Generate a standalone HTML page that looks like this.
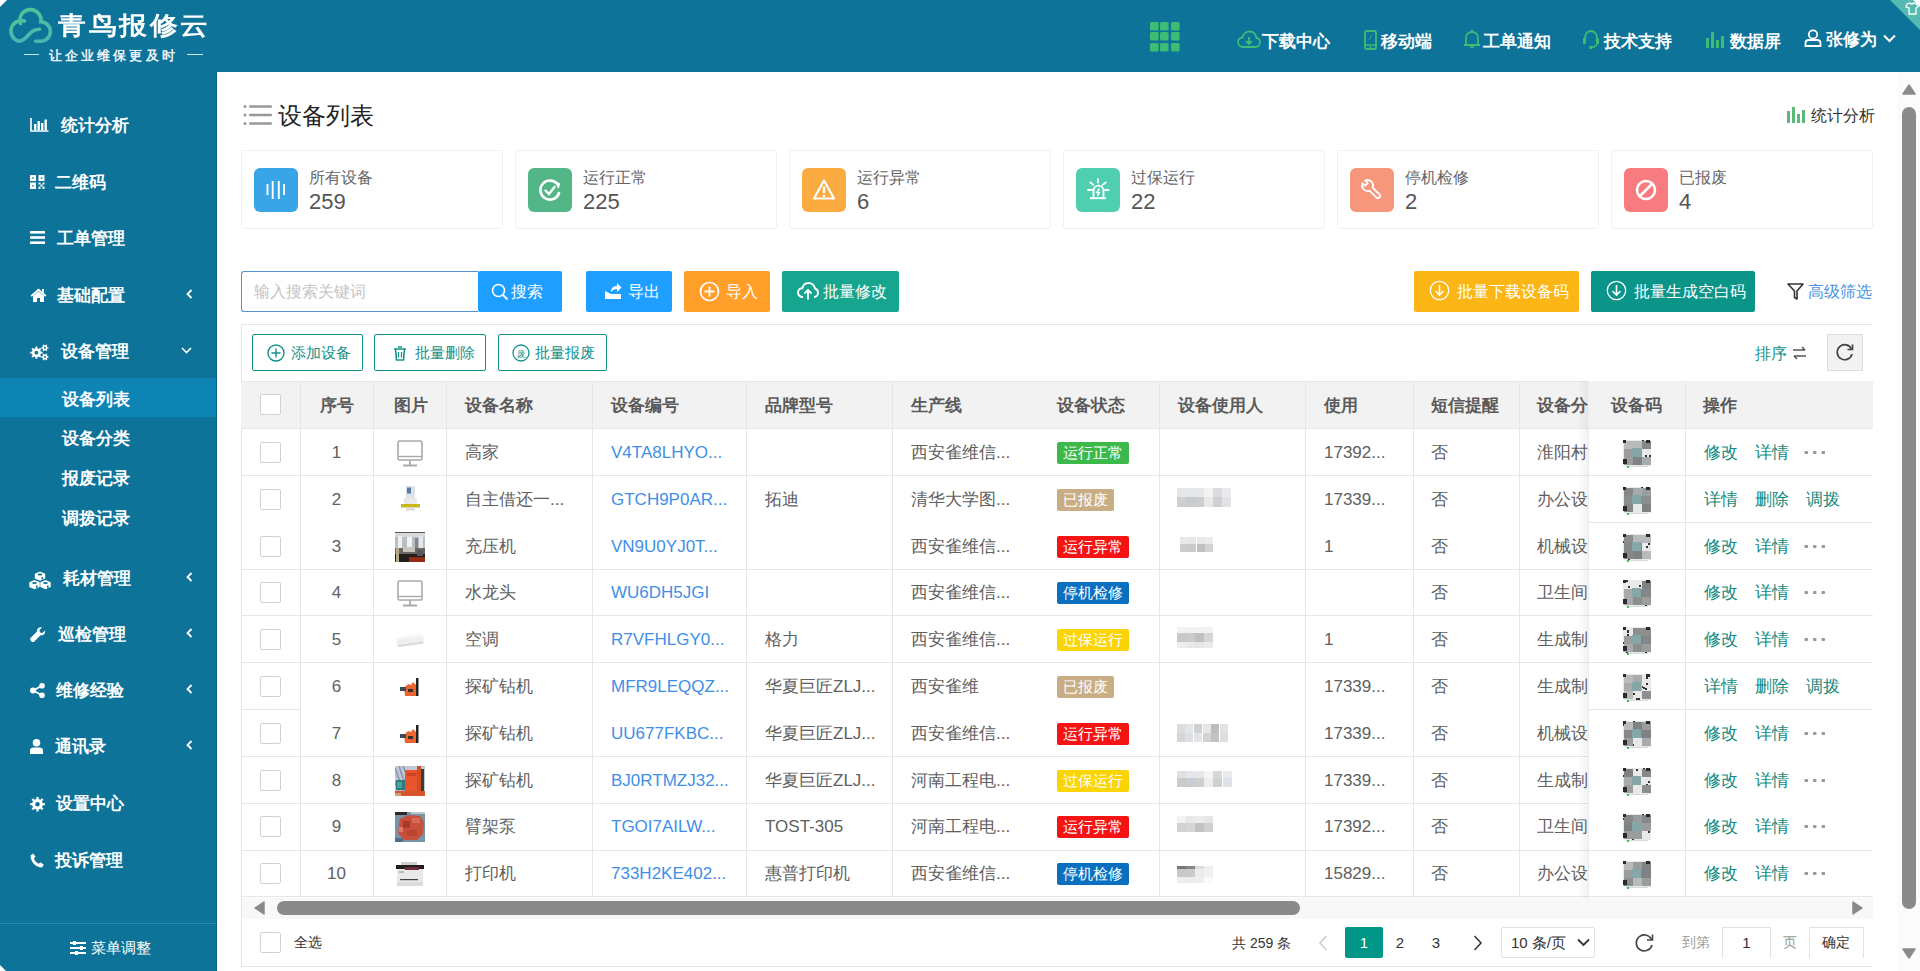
<!DOCTYPE html><html><head><meta charset="utf-8"><style>
*{box-sizing:border-box;margin:0;padding:0}
html,body{width:1920px;height:971px;overflow:hidden;background:#fff;font-family:"Liberation Sans",sans-serif;}
.abs{position:absolute}
.hdr{position:absolute;left:0;top:0;width:1920px;height:72px;background:#0d7399}
.side{position:absolute;left:0;top:72px;width:217px;height:899px;background:#0d7399}
.nav{position:absolute;top:31px;height:22px;line-height:22px;color:#fff;font-size:17px;font-weight:700;white-space:nowrap}
.mi{position:absolute;left:0;width:217px;height:40px;line-height:40px;color:#fff;font-size:17px;white-space:nowrap}
.t{position:absolute;white-space:nowrap}
</style></head><body>
<div class="hdr"><svg class="abs" style="left:0;top:0" width="60" height="50" viewBox="0 0 60 50">
<defs><linearGradient id="cg" x1="0" y1="0" x2="0" y2="1"><stop offset="0" stop-color="#52c29b"/><stop offset="1" stop-color="#46b6b2"/></linearGradient></defs>
<path d="M24.5 21 A10.2 10.2 0 1 0 18.5 41.2 C23 41.2 25.5 38.5 28.5 35 C31.5 31.5 34.5 29.3 39.5 29.3" fill="none" stroke="url(#cg)" stroke-width="3.6" stroke-linecap="round"/><path d="M20.5 23.5 A10.5 10.5 0 1 1 40.8 21.8 A9.7 9.7 0 0 1 40.5 41.2 H35.5" fill="none" stroke="url(#cg)" stroke-width="3.6" stroke-linecap="round"/>
<path d="M0 0 H7 L0 7 Z" fill="#fff"/>
</svg><div class="t" style="left:58px;top:11px;font-size:28px;line-height:34px;color:#fff;font-weight:700;letter-spacing:2.6px;transform:scaleY(0.9);transform-origin:0 0">青鸟报修云</div><div class="abs" style="left:24px;top:54px;width:15px;height:1px;background:#cfe3ea"></div><div class="abs" style="left:187px;top:54px;width:16px;height:1px;background:#cfe3ea"></div><div class="t" style="left:49px;top:48px;font-size:13px;line-height:16px;color:#eef4f7;letter-spacing:3.1px;font-family:'Liberation Serif',serif;font-weight:bold">让企业维保更及时</div><svg class="abs" style="left:1150px;top:22px" width="30" height="30" viewBox="0 0 30 30"><rect x="0" y="0" width="8.6" height="8.6" rx="1.5" fill="#3dbd74"/><rect x="0" y="10" width="8.6" height="8.6" rx="1.5" fill="#3dbd74"/><rect x="0" y="21" width="8.6" height="8.6" rx="1.5" fill="#3dbd74"/><rect x="10" y="0" width="8.6" height="8.6" rx="1.5" fill="#3dbd74"/><rect x="10" y="10" width="8.6" height="8.6" rx="1.5" fill="#3dbd74"/><rect x="10" y="21" width="8.6" height="8.6" rx="1.5" fill="#3dbd74"/><rect x="21" y="0" width="8.6" height="8.6" rx="1.5" fill="#3dbd74"/><rect x="21" y="10" width="8.6" height="8.6" rx="1.5" fill="#3dbd74"/><rect x="21" y="21" width="8.6" height="8.6" rx="1.5" fill="#3dbd74"/></svg><svg class="abs" style="left:1237px;top:30px" width="24" height="19" viewBox="0 0 24 19"><path d="M6 17 C3 17 1 15 1 12 C1 9.5 3 7.5 5.5 7.5 C6 4 9 1.5 12.5 1.5 C16.5 1.5 19 4.5 19.5 8 C21.5 8.3 23 10 23 12.3 C23 15 21 17 18.5 17 Z" fill="none" stroke="#3dbd74" stroke-width="1.8"/><path d="M12 7 V14 M9 11 L12 14 L15 11" fill="none" stroke="#3dbd74" stroke-width="1.8"/></svg><div class="nav" style="left:1262px">下载中心</div><svg class="abs" style="left:1364px;top:30px" width="13" height="20" viewBox="0 0 13 20"><rect x="1" y="1" width="11" height="18" rx="1.5" fill="none" stroke="#3dbd74" stroke-width="1.8"/><path d="M1 15 H12" stroke="#3dbd74" stroke-width="1.5"/><circle cx="6.5" cy="17" r="1" fill="#3dbd74"/><path d="M5 10 L8 5" stroke="#3dbd74" stroke-width="0.8"/></svg><div class="nav" style="left:1381px">移动端</div><svg class="abs" style="left:1463px;top:29px" width="18" height="20" viewBox="0 0 18 20"><path d="M3 16 V9 C3 5.5 5.5 3 9 3 C12.5 3 15 5.5 15 9 V16 M1 16 H17" fill="none" stroke="#3dbd74" stroke-width="1.8"/><path d="M9 1 V3" stroke="#3dbd74" stroke-width="1.8"/><path d="M7 18 H11" stroke="#3dbd74" stroke-width="1.8"/></svg><div class="nav" style="left:1483px">工单通知</div><svg class="abs" style="left:1582px;top:29px" width="18" height="21" viewBox="0 0 18 21"><path d="M3 12 V9 C3 5 5.5 2 9 2 C12.5 2 15 5 15 9 V12" fill="none" stroke="#3dbd74" stroke-width="1.8"/><rect x="1" y="9" width="3" height="6" rx="1" fill="#3dbd74"/><rect x="14" y="9" width="3" height="6" rx="1" fill="#3dbd74"/><path d="M15 14 C15 17 13 18 10 18" fill="none" stroke="#3dbd74" stroke-width="1.5"/><circle cx="9" cy="18.5" r="1.8" fill="#3dbd74"/></svg><div class="nav" style="left:1604px">技术支持</div><svg class="abs" style="left:1706px;top:31px" width="18" height="17" viewBox="0 0 18 17"><rect x="0" y="7" width="3" height="10" fill="#3dbd74"/><rect x="5" y="1" width="3" height="16" fill="#3dbd74"/><rect x="10" y="9" width="3" height="8" fill="#3dbd74"/><rect x="15" y="5" width="3" height="12" fill="#3dbd74"/></svg><div class="nav" style="left:1730px">数据屏</div><svg class="abs" style="left:1804px;top:29px" width="18" height="18" viewBox="0 0 18 18"><circle cx="9" cy="5.5" r="4.2" fill="none" stroke="#fff" stroke-width="1.8"/><path d="M1.5 17 V14 C1.5 12 3 11 5 11 H13 C15 11 16.5 12 16.5 14 V17 Z" fill="none" stroke="#fff" stroke-width="1.8"/></svg><div class="nav" style="left:1826px;top:29px">张修为</div><svg class="abs" style="left:1883px;top:34px" width="13" height="9" viewBox="0 0 13 9"><path d="M1 1.5 L6.5 7 L12 1.5" fill="none" stroke="#fff" stroke-width="2"/></svg><svg class="abs" style="left:1890px;top:0" width="30" height="30" viewBox="0 0 30 30"><path d="M0 0 H30 V30 Z" fill="#55bbb0"/><path d="M23 0 H30 V7 Z" fill="#fff"/><path d="M17 4 L20 3 C21 4.3 22.5 4.3 23.5 3 L26.5 4 L28 6.8 L26 8 V14 H19 V8 L16 6.8 Z" fill="none" stroke="#fff" stroke-width="1.3"/></svg></div><div class="side"><div class="abs" style="left:30px;top:46px;line-height:0"><svg width="19" height="14" viewBox="0 0 19 14"><path d="M1 0 V13 H18.5" fill="none" stroke="#fff" stroke-width="1.6"/><rect x="4" y="6" width="2.4" height="6" fill="#fff"/><rect x="7.5" y="3" width="2.4" height="9" fill="#fff"/><rect x="11" y="5" width="2.4" height="7" fill="#fff"/><rect x="14.5" y="1.5" width="2.4" height="10.5" fill="#fff"/></svg></div><div class="t" style="left:61px;top:44px;font-size:17px;line-height:20px;color:#fff;font-weight:700">统计分析</div><div class="abs" style="left:30px;top:103px;line-height:0"><svg width="15" height="14" viewBox="0 0 15 14"><path fill-rule="evenodd" d="M0 0h6v6h-6z M2.3 2.3v1.4h1.4v-1.4z M8.5 0h6v6h-6z M10.8 2.3v1.4h1.4v-1.4z M0 7.5h6v6.5h-6z M2.3 10v1.4h1.4v-1.4z" fill="#fff"/><path d="M8.5 7.5h2v2h-2z M12.5 7.5h2v2h-2z M10.5 9.5h2v2h-2z M8.5 11.5h2v2.5h-2z M12.5 11.5h2v2.5h-2z" fill="#fff"/></svg></div><div class="t" style="left:55px;top:101px;font-size:17px;line-height:20px;color:#fff;font-weight:700">二维码</div><div class="abs" style="left:30px;top:159px;line-height:0"><svg width="15" height="13" viewBox="0 0 15 13"><rect y="0" width="15" height="2.6" fill="#fff"/><rect y="5.2" width="15" height="2.6" fill="#fff"/><rect y="10.4" width="15" height="2.6" fill="#fff"/></svg></div><div class="t" style="left:57px;top:157px;font-size:17px;line-height:20px;color:#fff;font-weight:700">工单管理</div><div class="abs" style="left:30px;top:216px;line-height:0"><svg width="17" height="14" viewBox="0 0 17 14"><path d="M8.5 0.5 L16.5 7.5 L15.2 8.8 L8.5 3 L1.8 8.8 L0.5 7.5 Z M12 1 H14 V5 L12 3.3 Z M3 8 L8.5 3.5 L14 8 V14 H10 V10 H7 V14 H3 Z" fill="#fff"/></svg></div><div class="t" style="left:57px;top:214px;font-size:17px;line-height:20px;color:#fff;font-weight:700">基础配置</div><svg class="abs" style="left:186px;top:217px" width="7" height="10" viewBox="0 0 7 10"><path d="M5.5 1 L1.5 5 L5.5 9" fill="none" stroke="#fff" stroke-width="1.8"/></svg><div class="abs" style="left:30px;top:272px;line-height:0"><svg width="20" height="17" viewBox="0 0 20 17"><path fill-rule="evenodd" d="M10.91 7.80 L12.52 7.73 L12.52 9.67 L10.91 9.60 L10.22 11.26 L11.42 12.34 L10.04 13.72 L8.96 12.52 L7.30 13.21 L7.37 14.82 L5.43 14.82 L5.50 13.21 L3.84 12.52 L2.76 13.72 L1.38 12.34 L2.58 11.26 L1.89 9.60 L0.28 9.67 L0.28 7.73 L1.89 7.80 L2.58 6.14 L1.38 5.06 L2.76 3.68 L3.84 4.88 L5.50 4.19 L5.43 2.58 L7.37 2.58 L7.30 4.19 L8.96 4.88 L10.04 3.68 L11.42 5.06 L10.22 6.14 Z M8.30 8.70 A1.90 1.90 0 1 0 4.50 8.70 A1.90 1.90 0 1 0 8.30 8.70 Z" fill="#fff"/><path fill-rule="evenodd" d="M17.41 3.13 L18.42 3.05 L18.42 4.55 L17.41 4.47 L16.74 5.64 L17.31 6.48 L16.01 7.22 L15.57 6.31 L14.23 6.31 L13.79 7.22 L12.49 6.48 L13.06 5.64 L12.39 4.47 L11.38 4.55 L11.38 3.05 L12.39 3.13 L13.06 1.96 L12.49 1.12 L13.79 0.38 L14.23 1.29 L15.57 1.29 L16.01 0.38 L17.31 1.12 L16.74 1.96 Z M15.90 3.80 A1.00 1.00 0 1 0 13.90 3.80 A1.00 1.00 0 1 0 15.90 3.80 Z" fill="#fff"/><path fill-rule="evenodd" d="M17.41 12.33 L18.42 12.25 L18.42 13.75 L17.41 13.67 L16.74 14.84 L17.31 15.68 L16.01 16.42 L15.57 15.51 L14.23 15.51 L13.79 16.42 L12.49 15.68 L13.06 14.84 L12.39 13.67 L11.38 13.75 L11.38 12.25 L12.39 12.33 L13.06 11.16 L12.49 10.32 L13.79 9.58 L14.23 10.49 L15.57 10.49 L16.01 9.58 L17.31 10.32 L16.74 11.16 Z M15.90 13.00 A1.00 1.00 0 1 0 13.90 13.00 A1.00 1.00 0 1 0 15.90 13.00 Z" fill="#fff"/></svg></div><div class="t" style="left:61px;top:270px;font-size:17px;line-height:20px;color:#fff;font-weight:700">设备管理</div><svg class="abs" style="left:181px;top:275px" width="11" height="7" viewBox="0 0 11 7"><path d="M1 1 L5.5 5.5 L10 1" fill="none" stroke="#fff" stroke-width="1.6"/></svg><div class="abs" style="left:29px;top:499px;line-height:0"><svg width="22" height="19" viewBox="0 0 22 19"><path d="M11.0 0.4 L16.2 2.7 L16.2 7.6 L11.0 9.8 L5.8 7.6 L5.8 2.7 Z M5.5 8.9 L10.7 11.2 L10.7 16.1 L5.5 18.3 L0.3 16.1 L0.3 11.2 Z M16.5 8.9 L21.7 11.2 L21.7 16.1 L16.5 18.3 L11.3 16.1 L11.3 11.2 Z" fill="#fff"/><ellipse cx="11" cy="3.5" rx="2.4" ry="0.9" fill="#0d7399"/><ellipse cx="5.5" cy="12" rx="2.4" ry="0.9" fill="#0d7399"/><ellipse cx="16.5" cy="12" rx="2.4" ry="0.9" fill="#0d7399"/><rect x="12.5" y="6" width="1.6" height="2.4" fill="#0d7399"/><rect x="7" y="14.5" width="1.6" height="2.4" fill="#0d7399"/><rect x="18" y="14.5" width="1.6" height="2.4" fill="#0d7399"/></svg></div><div class="t" style="left:63px;top:497px;font-size:17px;line-height:20px;color:#fff;font-weight:700">耗材管理</div><svg class="abs" style="left:186px;top:500px" width="7" height="10" viewBox="0 0 7 10"><path d="M5.5 1 L1.5 5 L5.5 9" fill="none" stroke="#fff" stroke-width="1.8"/></svg><div class="abs" style="left:30px;top:555px;line-height:0"><svg width="16" height="16" viewBox="0 0 16 16"><path d="M15 3.5 L12.5 6 L10 5.5 L9.5 3 L12 0.5 C9.5 -0.5 6.5 1.5 7 4.5 L0.8 10.7 C0 11.5 0 13 0.8 13.8 L1.5 14.5 C2.3 15.3 3.5 15.3 4.3 14.5 L10.5 8.3 C13.5 9 15.8 6 15 3.5 Z" fill="#fff"/></svg></div><div class="t" style="left:58px;top:553px;font-size:17px;line-height:20px;color:#fff;font-weight:700">巡检管理</div><svg class="abs" style="left:186px;top:556px" width="7" height="10" viewBox="0 0 7 10"><path d="M5.5 1 L1.5 5 L5.5 9" fill="none" stroke="#fff" stroke-width="1.8"/></svg><div class="abs" style="left:30px;top:611px;line-height:0"><svg width="15" height="15" viewBox="0 0 15 15"><circle cx="3" cy="7.5" r="3" fill="#fff"/><circle cx="12" cy="2.8" r="2.8" fill="#fff"/><circle cx="12" cy="12.2" r="2.8" fill="#fff"/><path d="M3 7.5 L12 2.8 M3 7.5 L12 12.2" stroke="#fff" stroke-width="1.8"/></svg></div><div class="t" style="left:56px;top:609px;font-size:17px;line-height:20px;color:#fff;font-weight:700">维修经验</div><svg class="abs" style="left:186px;top:612px" width="7" height="10" viewBox="0 0 7 10"><path d="M5.5 1 L1.5 5 L5.5 9" fill="none" stroke="#fff" stroke-width="1.8"/></svg><div class="abs" style="left:30px;top:667px;line-height:0"><svg width="13" height="15" viewBox="0 0 13 15"><circle cx="6.5" cy="3.8" r="3.8" fill="#fff"/><path d="M0 15 V11.5 C0 9.5 1.5 8.5 3.5 8.5 H9.5 C11.5 8.5 13 9.5 13 11.5 V15 Z" fill="#fff"/></svg></div><div class="t" style="left:55px;top:665px;font-size:17px;line-height:20px;color:#fff;font-weight:700">通讯录</div><svg class="abs" style="left:186px;top:668px" width="7" height="10" viewBox="0 0 7 10"><path d="M5.5 1 L1.5 5 L5.5 9" fill="none" stroke="#fff" stroke-width="1.8"/></svg><div class="abs" style="left:30px;top:724px;line-height:0"><svg width="16" height="17" viewBox="0 0 16 17"><path fill-rule="evenodd" d="M12.80 7.15 L14.81 7.04 L14.81 9.36 L12.80 9.25 L11.99 11.20 L13.49 12.55 L11.85 14.19 L10.50 12.69 L8.55 13.50 L8.66 15.51 L6.34 15.51 L6.45 13.50 L4.50 12.69 L3.15 14.19 L1.51 12.55 L3.01 11.20 L2.20 9.25 L0.19 9.36 L0.19 7.04 L2.20 7.15 L3.01 5.20 L1.51 3.85 L3.15 2.21 L4.50 3.71 L6.45 2.90 L6.34 0.89 L8.66 0.89 L8.55 2.90 L10.50 3.71 L11.85 2.21 L13.49 3.85 L11.99 5.20 Z M9.80 8.20 A2.30 2.30 0 1 0 5.20 8.20 A2.30 2.30 0 1 0 9.80 8.20 Z" fill="#fff"/></svg></div><div class="t" style="left:56px;top:722px;font-size:17px;line-height:20px;color:#fff;font-weight:700">设置中心</div><div class="abs" style="left:30px;top:781px;line-height:0"><svg width="14" height="15" viewBox="0 0 14 15"><path d="M3 0.5 L5.5 3.5 L4 5.5 C4.8 7.8 6.5 9.8 8.8 10.8 L10.5 9.2 L13.8 11.8 L12 14.5 C6 14.5 0.5 9 0.5 2.5 Z" fill="#fff"/></svg></div><div class="t" style="left:55px;top:779px;font-size:17px;line-height:20px;color:#fff;font-weight:700">投诉管理</div><div class="abs" style="left:0;top:306px;width:216px;height:39px;background:#0d84b4"></div><div class="t" style="left:62px;top:318px;font-size:17px;line-height:20px;color:#fff;font-weight:700">设备列表</div><div class="t" style="left:62px;top:357px;font-size:17px;line-height:20px;color:#fff;font-weight:700">设备分类</div><div class="t" style="left:62px;top:397px;font-size:17px;line-height:20px;color:#fff;font-weight:700">报废记录</div><div class="t" style="left:62px;top:437px;font-size:17px;line-height:20px;color:#fff;font-weight:700">调拨记录</div><div class="abs" style="left:0;top:851px;width:216px;height:1px;background:#2f87ab"></div><div class="abs" style="left:216px;top:0;width:1px;height:899px;background:#0a6589"></div><svg class="abs" style="left:70px;top:869px" width="16" height="14" viewBox="0 0 16 14"><path d="M0 2h16 M0 7h16 M0 12h16" stroke="#fff" stroke-width="1.8"/><rect x="3" y="0" width="3" height="4" fill="#fff"/><rect x="10" y="5" width="3" height="4" fill="#fff"/><rect x="5" y="10" width="3" height="4" fill="#fff"/></svg><div class="t" style="left:91px;top:867px;font-size:15px;line-height:18px;color:#fff;font-weight:500">菜单调整</div><svg class="abs" style="left:0;top:893px" width="7" height="7" viewBox="0 0 7 7"><path d="M0 0 L7 7 H0 Z" fill="#fff"/></svg></div><div class="t" style="left:243px;top:104px;line-height:0"><svg width="30" height="22" viewBox="0 0 30 22"><circle cx="2" cy="2.5" r="1.5" fill="#999"/><circle cx="2" cy="11" r="1.5" fill="#999"/><circle cx="2" cy="19.5" r="1.5" fill="#999"/><rect x="6" y="1.3" width="23" height="2.5" rx="1.2" fill="#999"/><rect x="6" y="9.8" width="23" height="2.5" rx="1.2" fill="#999"/><rect x="6" y="18.3" width="23" height="2.5" rx="1.2" fill="#999"/></svg></div><div class="t" style="left:278px;top:102px;font-size:24px;line-height:28px;color:#222">设备列表</div><svg class="abs" style="left:1787px;top:107px" width="18" height="16" viewBox="0 0 18 16"><rect x="0" y="4" width="3" height="12" fill="#5fb878"/><rect x="5" y="0" width="3" height="16" fill="#5fb878"/><rect x="10" y="7" width="3" height="9" fill="#5fb878"/><rect x="15" y="3" width="3" height="13" fill="#5fb878"/></svg><div class="t" style="left:1811px;top:106px;font-size:16px;line-height:20px;color:#333">统计分析</div><div class="abs" style="left:241px;top:150px;width:262px;height:79px;border:1px solid #f0f0f0;border-radius:3px;background:#fff"></div><div class="abs" style="left:254px;top:168px;width:44px;height:44px;border-radius:6px;background:#3aa5e6;line-height:0"><svg width="44" height="44" viewBox="0 0 44 44"><path d="M13.5 16 V27 M18.7 13 V31 M24.8 13 V31 M30 16 V27" stroke="#fff" stroke-width="1.9"/></svg></div><div class="t" style="left:309px;top:168px;font-size:16px;line-height:20px;color:#666">所有设备</div><div class="t" style="left:309px;top:189px;font-size:22px;line-height:26px;color:#555">259</div><div class="abs" style="left:515px;top:150px;width:262px;height:79px;border:1px solid #f0f0f0;border-radius:3px;background:#fff"></div><div class="abs" style="left:528px;top:168px;width:44px;height:44px;border-radius:6px;background:#52b686;line-height:0"><svg width="44" height="44" viewBox="0 0 44 44"><path d="M30 17 A9.5 9.5 0 1 0 31 25" fill="none" stroke="#fff" stroke-width="2.6" stroke-linecap="round"/><path d="M27.5 14.5 L31.5 16 L30 20" fill="#fff" stroke="#fff" stroke-width="1.5"/><path d="M17.5 22.5 L21 26 L26.5 19" fill="none" stroke="#fff" stroke-width="2.4" stroke-linecap="round"/></svg></div><div class="t" style="left:583px;top:168px;font-size:16px;line-height:20px;color:#666">运行正常</div><div class="t" style="left:583px;top:189px;font-size:22px;line-height:26px;color:#555">225</div><div class="abs" style="left:789px;top:150px;width:262px;height:79px;border:1px solid #f0f0f0;border-radius:3px;background:#fff"></div><div class="abs" style="left:802px;top:168px;width:44px;height:44px;border-radius:6px;background:#fbab3f;line-height:0"><svg width="44" height="44" viewBox="0 0 44 44"><path d="M22 12.5 L32 30.5 H12 Z" fill="none" stroke="#fff" stroke-width="2.2" stroke-linejoin="round"/><path d="M22 18.5 V25" stroke="#fff" stroke-width="2.4"/><circle cx="22" cy="27.8" r="1.3" fill="#fff"/></svg></div><div class="t" style="left:857px;top:168px;font-size:16px;line-height:20px;color:#666">运行异常</div><div class="t" style="left:857px;top:189px;font-size:22px;line-height:26px;color:#555">6</div><div class="abs" style="left:1063px;top:150px;width:262px;height:79px;border:1px solid #f0f0f0;border-radius:3px;background:#fff"></div><div class="abs" style="left:1076px;top:168px;width:44px;height:44px;border-radius:6px;background:#4fcfb0;line-height:0"><svg width="44" height="44" viewBox="0 0 44 44"><path d="M17.5 30 V23 C17.5 19.8 19.8 17.6 22.5 17.6 C25.2 17.6 27.5 19.8 27.5 23 V30" fill="none" stroke="#fff" stroke-width="1.8"/><path d="M14 30.2 H30" stroke="#fff" stroke-width="1.9"/><path d="M22 10.9 V14.5 M14.3 14.5 L17.3 16.8 M29.7 14.5 L26.7 16.8 M12 22 H16 M29 22 H32.6" stroke="#fff" stroke-width="1.8" stroke-linecap="round"/><path d="M23.3 20.5 L20.8 24.5 H23.3 L21.5 28" fill="none" stroke="#fff" stroke-width="1.5"/></svg></div><div class="t" style="left:1131px;top:168px;font-size:16px;line-height:20px;color:#666">过保运行</div><div class="t" style="left:1131px;top:189px;font-size:22px;line-height:26px;color:#555">22</div><div class="abs" style="left:1337px;top:150px;width:262px;height:79px;border:1px solid #f0f0f0;border-radius:3px;background:#fff"></div><div class="abs" style="left:1350px;top:168px;width:44px;height:44px;border-radius:6px;background:#f6967a;line-height:0"><svg width="44" height="44" viewBox="0 0 44 44"><path transform="translate(22.5 22.5) rotate(-45)" d="M-2.2 -2 L-2.2 8 Q-2.2 9.8 0 9.8 Q2.2 9.8 2.2 8 L2.2 -2 A5.5 5.5 0 0 0 1.8 -12.2 L1.8 -8.5 L-1.8 -8.5 L-1.8 -12.2 A5.5 5.5 0 0 0 -2.2 -2 Z" fill="none" stroke="#fff" stroke-width="1.8" stroke-linejoin="round"/></svg></div><div class="t" style="left:1405px;top:168px;font-size:16px;line-height:20px;color:#666">停机检修</div><div class="t" style="left:1405px;top:189px;font-size:22px;line-height:26px;color:#555">2</div><div class="abs" style="left:1611px;top:150px;width:262px;height:79px;border:1px solid #f0f0f0;border-radius:3px;background:#fff"></div><div class="abs" style="left:1624px;top:168px;width:44px;height:44px;border-radius:6px;background:#f77b7f;line-height:0"><svg width="44" height="44" viewBox="0 0 44 44"><circle cx="22" cy="22" r="9" fill="none" stroke="#fff" stroke-width="2.6"/><path d="M16 28 L28 16" stroke="#fff" stroke-width="2.6"/></svg></div><div class="t" style="left:1679px;top:168px;font-size:16px;line-height:20px;color:#666">已报废</div><div class="t" style="left:1679px;top:189px;font-size:22px;line-height:26px;color:#555">4</div><div class="abs" style="left:241px;top:271px;width:237px;height:41px;border:1px solid #4f92d6;border-right:none;border-radius:3px 0 0 3px;background:#fff"></div><div class="t" style="left:254px;top:282px;font-size:16px;line-height:20px;color:#c4c4c4">输入搜索关键词</div><div class="abs" style="left:478px;top:271px;width:84px;height:41px;background:#1e9fff;border-radius:2px"></div><svg class="abs" style="left:491px;top:283px" width="18" height="18" viewBox="0 0 18 18"><circle cx="7.5" cy="7.5" r="6" fill="none" stroke="#fff" stroke-width="1.6"/><path d="M12 12 L16.5 16.5" stroke="#fff" stroke-width="1.8"/></svg><div class="t" style="left:511px;top:282px;font-size:16px;line-height:20px;color:#fff">搜索</div><div class="abs" style="left:478px;top:271px;width:84px;height:41px;border-radius:0 3px 3px 0"></div><div class="abs" style="left:586px;top:271px;width:86px;height:41px;background:#1e9fff;border-radius:2px"></div><svg class="abs" style="left:604px;top:282px" width="18" height="18" viewBox="0 0 18 18"><path d="M1 9 V17 H17 V12 H7 Z" fill="#fff"/><path d="M7 10 C7 6 9.5 4 13 4 V1 L17.5 5.5 L13 10 V7 C10.5 7 8.5 8 7 10 Z" fill="#fff"/></svg><div class="t" style="left:628px;top:282px;font-size:16px;line-height:20px;color:#fff">导出</div><div class="abs" style="left:684px;top:271px;width:86px;height:41px;background:#ff9f2a;border-radius:2px"></div><svg class="abs" style="left:699px;top:281px" width="21" height="21" viewBox="0 0 21 21"><circle cx="10.5" cy="10.5" r="9" fill="none" stroke="#fff" stroke-width="1.7"/><path d="M10.5 5.5 V15.5 M5.5 10.5 H15.5" stroke="#fff" stroke-width="1.8"/></svg><div class="t" style="left:726px;top:282px;font-size:16px;line-height:20px;color:#fff">导入</div><div class="abs" style="left:782px;top:271px;width:117px;height:41px;background:#16a68f;border-radius:2px"></div><svg class="abs" style="left:797px;top:282px" width="22" height="18" viewBox="0 0 22 18"><path d="M6 15 C3 15 1 13 1 10.5 C1 8 3 6.3 5.3 6.3 C6 3.3 8.5 1 11.5 1 C15 1 17.5 3.5 18 6.5 C20 7 21 8.5 21 10.8 C21 13 19.5 15 17 15" fill="none" stroke="#fff" stroke-width="1.9"/><path d="M11 17.5 V8 M7.5 11.5 L11 8 L14.5 11.5" fill="none" stroke="#fff" stroke-width="1.9"/></svg><div class="t" style="left:823px;top:282px;font-size:16px;line-height:20px;color:#fff">批量修改</div><div class="abs" style="left:1414px;top:271px;width:165px;height:41px;background:#fbb514;border-radius:2px"></div><svg class="abs" style="left:1429px;top:280px" width="21" height="21" viewBox="0 0 21 21"><circle cx="10.5" cy="10.5" r="9.2" fill="none" stroke="#fff" stroke-width="1.3"/><path d="M10.5 5 V15 M6.5 11 L10.5 15 L14.5 11" fill="none" stroke="#fff" stroke-width="1.6"/></svg><div class="t" style="left:1457px;top:282px;font-size:16px;line-height:20px;color:#fff">批量下载设备码</div><div class="abs" style="left:1591px;top:271px;width:164px;height:41px;background:#0b9488;border-radius:2px"></div><svg class="abs" style="left:1606px;top:280px" width="21" height="21" viewBox="0 0 21 21"><circle cx="10.5" cy="10.5" r="9.2" fill="none" stroke="#fff" stroke-width="1.3"/><path d="M10.5 5 V15 M6.5 11 L10.5 15 L14.5 11" fill="none" stroke="#fff" stroke-width="1.6"/></svg><div class="t" style="left:1634px;top:282px;font-size:16px;line-height:20px;color:#fff">批量生成空白码</div><svg class="abs" style="left:1787px;top:283px" width="17" height="17" viewBox="0 0 17 17"><path d="M1 1 H16 L10 8 V16 L7.5 14.5 V8 Z" fill="none" stroke="#333" stroke-width="1.6" stroke-linejoin="round"/></svg><div class="t" style="left:1808px;top:282px;font-size:16px;line-height:20px;color:#4d94dd">高级筛选</div><div class="abs" style="left:241px;top:324px;width:1632px;height:643px;border:1px solid #e6e6e6;border-right:none"></div><div class="abs" style="left:252px;top:334px;width:111px;height:37px;border:1px solid #16918a;border-radius:2px;background:#fff"></div><svg class="abs" style="left:267px;top:344px" width="18" height="18" viewBox="0 0 18 18"><circle cx="9" cy="9" r="8" fill="none" stroke="#16918a" stroke-width="1.4"/><path d="M9 4.5 V13.5 M4.5 9 H13.5" stroke="#16918a" stroke-width="1.4"/></svg><div class="t" style="left:291px;top:343px;font-size:15px;line-height:19px;color:#16918a">添加设备</div><div class="abs" style="left:374px;top:334px;width:112px;height:37px;border:1px solid #16918a;border-radius:2px;background:#fff"></div><svg class="abs" style="left:393px;top:346px" width="14" height="15" viewBox="0 0 14 15"><path d="M1 3 H13 M5 1 H9 M2.5 3 L3.5 14 H10.5 L11.5 3" fill="none" stroke="#16918a" stroke-width="1.6"/><path d="M5.5 6 V11.5 M8.5 6 V11.5" stroke="#16918a" stroke-width="1.3"/></svg><div class="t" style="left:415px;top:343px;font-size:15px;line-height:19px;color:#16918a">批量删除</div><div class="abs" style="left:498px;top:334px;width:109px;height:37px;border:1px solid #16918a;border-radius:2px;background:#fff"></div><svg class="abs" style="left:512px;top:344px" width="18" height="18" viewBox="0 0 18 18"><circle cx="9" cy="9" r="8" fill="none" stroke="#16918a" stroke-width="1.3"/><text x="9" y="12.5" font-size="9" text-anchor="middle" fill="#16918a">废</text></svg><div class="t" style="left:535px;top:343px;font-size:15px;line-height:19px;color:#16918a">批量报废</div><div class="t" style="left:1755px;top:344px;font-size:16px;line-height:20px;color:#16918a">排序</div><svg class="abs" style="left:1792px;top:346px" width="15" height="14" viewBox="0 0 15 14"><path d="M1 4 H13 M10 1 L13 4 M14 10 H2 M5 13 L2 10" fill="none" stroke="#555" stroke-width="1.5"/></svg><div class="abs" style="left:1827px;top:334px;width:36px;height:37px;border:1px solid #ddd;background:#f2f2f2"></div><svg class="abs" style="left:1835px;top:342px" width="20" height="20" viewBox="0 0 20 20"><path d="M16.5 7 A7.5 7.5 0 1 0 17 12" fill="none" stroke="#444" stroke-width="1.7"/><path d="M17.5 2.5 V7.5 H12.5" fill="none" stroke="#444" stroke-width="1.7"/></svg><div class="abs" style="left:241px;top:381px;width:1632px;height:47px;background:#f2f2f2"></div><div class="abs" style="left:300px;top:381px;width:1px;height:517px;background:#e6e6e6"></div><div class="abs" style="left:373px;top:381px;width:1px;height:517px;background:#e6e6e6"></div><div class="abs" style="left:446px;top:381px;width:1px;height:517px;background:#e6e6e6"></div><div class="abs" style="left:592px;top:381px;width:1px;height:517px;background:#e6e6e6"></div><div class="abs" style="left:746px;top:381px;width:1px;height:517px;background:#e6e6e6"></div><div class="abs" style="left:892px;top:381px;width:1px;height:517px;background:#e6e6e6"></div><div class="abs" style="left:1159px;top:381px;width:1px;height:517px;background:#e6e6e6"></div><div class="abs" style="left:1305px;top:381px;width:1px;height:517px;background:#e6e6e6"></div><div class="abs" style="left:1413px;top:381px;width:1px;height:517px;background:#e6e6e6"></div><div class="abs" style="left:1519px;top:381px;width:1px;height:517px;background:#e6e6e6"></div><div class="abs" style="left:1588px;top:381px;width:1px;height:517px;background:#e6e6e6"></div><div class="abs" style="left:1685px;top:381px;width:1px;height:517px;background:#e6e6e6"></div><div class="abs" style="left:241px;top:428px;width:59px;height:1px;background:#e6e6e6"></div><div class="abs" style="left:241px;top:475px;width:59px;height:1px;background:#e6e6e6"></div><div class="abs" style="left:241px;top:569px;width:59px;height:1px;background:#e6e6e6"></div><div class="abs" style="left:241px;top:615px;width:59px;height:1px;background:#e6e6e6"></div><div class="abs" style="left:241px;top:662px;width:59px;height:1px;background:#e6e6e6"></div><div class="abs" style="left:241px;top:709px;width:59px;height:1px;background:#e6e6e6"></div><div class="abs" style="left:241px;top:756px;width:59px;height:1px;background:#e6e6e6"></div><div class="abs" style="left:241px;top:803px;width:59px;height:1px;background:#e6e6e6"></div><div class="abs" style="left:241px;top:850px;width:59px;height:1px;background:#e6e6e6"></div><div class="abs" style="left:241px;top:896px;width:59px;height:1px;background:#e6e6e6"></div><div class="abs" style="left:300px;top:428px;width:1288px;height:1px;background:#e6e6e6"></div><div class="abs" style="left:300px;top:475px;width:1288px;height:1px;background:#e6e6e6"></div><div class="abs" style="left:300px;top:569px;width:1288px;height:1px;background:#e6e6e6"></div><div class="abs" style="left:300px;top:615px;width:1288px;height:1px;background:#e6e6e6"></div><div class="abs" style="left:300px;top:662px;width:1288px;height:1px;background:#e6e6e6"></div><div class="abs" style="left:300px;top:756px;width:1288px;height:1px;background:#e6e6e6"></div><div class="abs" style="left:300px;top:803px;width:1288px;height:1px;background:#e6e6e6"></div><div class="abs" style="left:300px;top:850px;width:1288px;height:1px;background:#e6e6e6"></div><div class="abs" style="left:300px;top:896px;width:1288px;height:1px;background:#e6e6e6"></div><div class="abs" style="left:241px;top:381px;width:1632px;height:1px;background:#e6e6e6"></div><div class="abs" style="left:260px;top:394px;width:21px;height:21px;border:1px solid #d2d2d2;border-radius:2px;background:#fff"></div><div class="t" style="left:320px;top:396px;font-size:17px;line-height:20px;color:#5a5a5a;font-weight:700">序号</div><div class="t" style="left:394px;top:396px;font-size:17px;line-height:20px;color:#5a5a5a;font-weight:700">图片</div><div class="t" style="left:465px;top:396px;font-size:17px;line-height:20px;color:#5a5a5a;font-weight:700">设备名称</div><div class="t" style="left:611px;top:396px;font-size:17px;line-height:20px;color:#5a5a5a;font-weight:700">设备编号</div><div class="t" style="left:765px;top:396px;font-size:17px;line-height:20px;color:#5a5a5a;font-weight:700">品牌型号</div><div class="t" style="left:911px;top:396px;font-size:17px;line-height:20px;color:#5a5a5a;font-weight:700">生产线</div><div class="t" style="left:1057px;top:396px;font-size:17px;line-height:20px;color:#5a5a5a;font-weight:700">设备状态</div><div class="t" style="left:1178px;top:396px;font-size:17px;line-height:20px;color:#5a5a5a;font-weight:700">设备使用人</div><div class="t" style="left:1324px;top:396px;font-size:17px;line-height:20px;color:#5a5a5a;font-weight:700">使用</div><div class="t" style="left:1431px;top:396px;font-size:17px;line-height:20px;color:#5a5a5a;font-weight:700">短信提醒</div><div class="t" style="left:1537px;top:396px;font-size:17px;line-height:20px;color:#5a5a5a;font-weight:700">设备分</div><div class="t" style="left:1611px;top:396px;font-size:17px;line-height:20px;color:#5a5a5a;font-weight:700">设备码</div><div class="t" style="left:1703px;top:396px;font-size:17px;line-height:20px;color:#5a5a5a;font-weight:700">操作</div><div class="abs" style="left:260px;top:442px;width:21px;height:21px;border:1px solid #d2d2d2;border-radius:2px;background:#fff"></div><div class="t" style="left:300px;width:73px;text-align:center;top:443px;font-size:17px;line-height:20px;color:#606060">1</div><div class="abs" style="left:397px;top:440px;line-height:0"><svg width="26" height="27" viewBox="0 0 26 27"><rect x="1" y="1" width="24" height="19" rx="1.5" fill="none" stroke="#aaa" stroke-width="1.6"/><path d="M1 16.5 H25" stroke="#aaa" stroke-width="1.4"/><path d="M13 20 V25 M6 25.5 H20" stroke="#aaa" stroke-width="1.8"/></svg></div><div class="t" style="left:465px;top:443px;font-size:17px;line-height:20px;color:#606060">高家</div><div class="t" style="left:611px;top:443px;font-size:17px;line-height:20px;color:#3f8fe6">V4TA8LHYO...</div><div class="t" style="left:911px;top:443px;font-size:17px;line-height:20px;color:#606060">西安雀维信...</div><div class="t" style="left:1057px;top:442px;width:72px;height:22px;line-height:22px;text-align:center;border-radius:2px;background:#3cb94a;color:#fff;font-size:15px">运行正常</div><div class="t" style="left:1324px;top:443px;font-size:17px;line-height:20px;color:#606060">17392...</div><div class="t" style="left:1431px;top:443px;font-size:17px;line-height:20px;color:#606060">否</div><div class="t" style="left:1537px;top:443px;width:51px;overflow:hidden;font-size:17px;line-height:20px;color:#606060">淮阳村</div><div class="abs" style="left:260px;top:489px;width:21px;height:21px;border:1px solid #d2d2d2;border-radius:2px;background:#fff"></div><div class="t" style="left:300px;width:73px;text-align:center;top:490px;font-size:17px;line-height:20px;color:#606060">2</div><div class="abs" style="left:395px;top:485px;line-height:0"><svg width="30" height="30" viewBox="0 0 30 30"><rect x="11" y="1" width="9" height="12" fill="#dde3ea"/><rect x="12" y="2.5" width="4" height="6" fill="#5a7ca5"/><rect x="9" y="13" width="13" height="6" fill="#e9e9e9"/><rect x="6" y="19" width="19" height="3.5" fill="#c8b818"/><rect x="11" y="22.5" width="9" height="3" fill="#ddd"/></svg></div><div class="t" style="left:465px;top:490px;font-size:17px;line-height:20px;color:#606060">自主借还一...</div><div class="t" style="left:611px;top:490px;font-size:17px;line-height:20px;color:#3f8fe6">GTCH9P0AR...</div><div class="t" style="left:765px;top:490px;font-size:17px;line-height:20px;color:#606060">拓迪</div><div class="t" style="left:911px;top:490px;font-size:17px;line-height:20px;color:#606060">清华大学图...</div><div class="t" style="left:1057px;top:489px;width:57px;height:22px;line-height:22px;text-align:center;border-radius:2px;background:#c9ad84;color:#fff;font-size:15px">已报废</div><div class="abs" style="left:1177px;top:488px;filter:blur(0.5px)"><div style="position:absolute;left:0px;top:0px;width:9px;height:9px;background:#e6e6e6"></div><div style="position:absolute;left:9px;top:0px;width:9px;height:9px;background:#e4e8ec"></div><div style="position:absolute;left:18px;top:0px;width:9px;height:9px;background:#e8e8e8"></div><div style="position:absolute;left:27px;top:0px;width:9px;height:9px;background:#f3f3f3"></div><div style="position:absolute;left:36px;top:0px;width:9px;height:9px;background:#dcdcdc"></div><div style="position:absolute;left:45px;top:0px;width:9px;height:9px;background:#e8eaee"></div><div style="position:absolute;left:0px;top:9px;width:9px;height:10px;background:#cfcfcf"></div><div style="position:absolute;left:9px;top:9px;width:9px;height:10px;background:#c8cbd0"></div><div style="position:absolute;left:18px;top:9px;width:9px;height:10px;background:#cdcdcd"></div><div style="position:absolute;left:27px;top:9px;width:9px;height:10px;background:#e9e9e9"></div><div style="position:absolute;left:36px;top:9px;width:9px;height:10px;background:#d0d0d0"></div><div style="position:absolute;left:45px;top:9px;width:9px;height:10px;background:#e0e2e6"></div></div><div class="t" style="left:1324px;top:490px;font-size:17px;line-height:20px;color:#606060">17339...</div><div class="t" style="left:1431px;top:490px;font-size:17px;line-height:20px;color:#606060">否</div><div class="t" style="left:1537px;top:490px;width:51px;overflow:hidden;font-size:17px;line-height:20px;color:#606060">办公设</div><div class="abs" style="left:260px;top:536px;width:21px;height:21px;border:1px solid #d2d2d2;border-radius:2px;background:#fff"></div><div class="t" style="left:300px;width:73px;text-align:center;top:537px;font-size:17px;line-height:20px;color:#606060">3</div><div class="abs" style="left:395px;top:532px;line-height:0"><svg width="30" height="30" viewBox="0 0 30 30"><rect width="30" height="30" fill="#8e9092"/><rect x="0" y="0" width="30" height="5" fill="#d6dadd"/><rect x="0" y="0" width="30" height="1" fill="#555"/><rect x="0" y="5" width="30" height="11" fill="#b9bec2"/><rect x="3" y="4" width="4" height="14" fill="#eef0f2"/><rect x="12" y="5" width="5" height="12" fill="#f2f2f2"/><rect x="20" y="6" width="3" height="10" fill="#7f858a"/><rect x="24" y="4" width="4" height="13" fill="#e4e6e8"/><rect x="0" y="16" width="30" height="6" fill="#6a6866"/><rect x="8" y="15" width="12" height="5" fill="#c9c3bd"/><rect x="0" y="22" width="30" height="8" fill="#231e1b"/><rect x="1" y="16" width="3" height="14" fill="#b7aa88"/><rect x="14" y="25" width="16" height="5" fill="#8f2c17"/><rect x="22" y="18" width="6" height="6" fill="#555a5e"/></svg></div><div class="t" style="left:465px;top:537px;font-size:17px;line-height:20px;color:#606060">充压机</div><div class="t" style="left:611px;top:537px;font-size:17px;line-height:20px;color:#3f8fe6">VN9U0YJ0T...</div><div class="t" style="left:911px;top:537px;font-size:17px;line-height:20px;color:#606060">西安雀维信...</div><div class="t" style="left:1057px;top:536px;width:72px;height:22px;line-height:22px;text-align:center;border-radius:2px;background:#f41414;color:#fff;font-size:15px">运行异常</div><div class="abs" style="left:1180px;top:537px;filter:blur(0.5px)"><div style="position:absolute;left:0px;top:0px;width:8px;height:7px;background:#e8e8e8"></div><div style="position:absolute;left:8px;top:0px;width:8px;height:7px;background:#e6e6e6"></div><div style="position:absolute;left:17px;top:0px;width:8px;height:7px;background:#e8e8e8"></div><div style="position:absolute;left:25px;top:0px;width:8px;height:7px;background:#ececec"></div><div style="position:absolute;left:0px;top:7px;width:8px;height:8px;background:#cccccc"></div><div style="position:absolute;left:8px;top:7px;width:8px;height:8px;background:#c9cacc"></div><div style="position:absolute;left:17px;top:7px;width:8px;height:8px;background:#c0c0c0"></div><div style="position:absolute;left:25px;top:7px;width:8px;height:8px;background:#d2d2d2"></div></div><div class="t" style="left:1324px;top:537px;font-size:17px;line-height:20px;color:#606060">1</div><div class="t" style="left:1431px;top:537px;font-size:17px;line-height:20px;color:#606060">否</div><div class="t" style="left:1537px;top:537px;width:51px;overflow:hidden;font-size:17px;line-height:20px;color:#606060">机械设</div><div class="abs" style="left:260px;top:582px;width:21px;height:21px;border:1px solid #d2d2d2;border-radius:2px;background:#fff"></div><div class="t" style="left:300px;width:73px;text-align:center;top:583px;font-size:17px;line-height:20px;color:#606060">4</div><div class="abs" style="left:397px;top:580px;line-height:0"><svg width="26" height="27" viewBox="0 0 26 27"><rect x="1" y="1" width="24" height="19" rx="1.5" fill="none" stroke="#aaa" stroke-width="1.6"/><path d="M1 16.5 H25" stroke="#aaa" stroke-width="1.4"/><path d="M13 20 V25 M6 25.5 H20" stroke="#aaa" stroke-width="1.8"/></svg></div><div class="t" style="left:465px;top:583px;font-size:17px;line-height:20px;color:#606060">水龙头</div><div class="t" style="left:611px;top:583px;font-size:17px;line-height:20px;color:#3f8fe6">WU6DH5JGI</div><div class="t" style="left:911px;top:583px;font-size:17px;line-height:20px;color:#606060">西安雀维信...</div><div class="t" style="left:1057px;top:582px;width:72px;height:22px;line-height:22px;text-align:center;border-radius:2px;background:#0b6fc0;color:#fff;font-size:15px">停机检修</div><div class="t" style="left:1431px;top:583px;font-size:17px;line-height:20px;color:#606060">否</div><div class="t" style="left:1537px;top:583px;width:51px;overflow:hidden;font-size:17px;line-height:20px;color:#606060">卫生间</div><div class="abs" style="left:260px;top:629px;width:21px;height:21px;border:1px solid #d2d2d2;border-radius:2px;background:#fff"></div><div class="t" style="left:300px;width:73px;text-align:center;top:630px;font-size:17px;line-height:20px;color:#606060">5</div><div class="abs" style="left:396px;top:633px;line-height:0"><svg width="28" height="15" viewBox="0 0 28 15"><path d="M1 4.5 L25 1 L27.5 3 V10.5 L2.5 14 L1 13 Z" fill="#efefef"/><path d="M1 4.5 L25 1 L27.5 3 L3 6.5 Z" fill="#f8f8f8"/><path d="M2.5 12 L27.5 8.5 V10.5 L2.5 14 Z" fill="#d9d9d9"/></svg></div><div class="t" style="left:465px;top:630px;font-size:17px;line-height:20px;color:#606060">空调</div><div class="t" style="left:611px;top:630px;font-size:17px;line-height:20px;color:#3f8fe6">R7VFHLGY0...</div><div class="t" style="left:765px;top:630px;font-size:17px;line-height:20px;color:#606060">格力</div><div class="t" style="left:911px;top:630px;font-size:17px;line-height:20px;color:#606060">西安雀维信...</div><div class="t" style="left:1057px;top:629px;width:72px;height:22px;line-height:22px;text-align:center;border-radius:2px;background:#fbd406;color:#fff;font-size:15px">过保运行</div><div class="abs" style="left:1177px;top:627px;filter:blur(0.5px)"><div style="position:absolute;left:0px;top:0px;width:9px;height:6px;background:#f2f2f2"></div><div style="position:absolute;left:9px;top:0px;width:9px;height:6px;background:#f0f0f0"></div><div style="position:absolute;left:18px;top:0px;width:9px;height:6px;background:#f2f2f2"></div><div style="position:absolute;left:27px;top:0px;width:9px;height:6px;background:#f2f2f2"></div><div style="position:absolute;left:0px;top:6px;width:9px;height:9px;background:#c8c8c8"></div><div style="position:absolute;left:9px;top:6px;width:9px;height:9px;background:#cacbcd"></div><div style="position:absolute;left:18px;top:6px;width:9px;height:9px;background:#c0c0c0"></div><div style="position:absolute;left:27px;top:6px;width:9px;height:9px;background:#d6d6d8"></div><div style="position:absolute;left:0px;top:15px;width:9px;height:6px;background:#ededed"></div><div style="position:absolute;left:9px;top:15px;width:9px;height:6px;background:#e9e9e9"></div><div style="position:absolute;left:18px;top:15px;width:9px;height:6px;background:#e6e6e6"></div><div style="position:absolute;left:27px;top:15px;width:9px;height:6px;background:#ebebeb"></div></div><div class="t" style="left:1324px;top:630px;font-size:17px;line-height:20px;color:#606060">1</div><div class="t" style="left:1431px;top:630px;font-size:17px;line-height:20px;color:#606060">否</div><div class="t" style="left:1537px;top:630px;width:51px;overflow:hidden;font-size:17px;line-height:20px;color:#606060">生成制</div><div class="abs" style="left:260px;top:676px;width:21px;height:21px;border:1px solid #d2d2d2;border-radius:2px;background:#fff"></div><div class="t" style="left:300px;width:73px;text-align:center;top:677px;font-size:17px;line-height:20px;color:#606060">6</div><div class="abs" style="left:400px;top:677px;line-height:0"><svg width="20" height="21" viewBox="0 0 20 21"><rect x="16" y="1" width="2.5" height="18" fill="#222"/><path d="M4 11 L8 7 L11 8 L13 5 L16 8 V19 H5 Z" fill="#ec6430"/><rect x="0" y="10" width="6" height="4" fill="#3b4b55"/><rect x="8" y="12" width="5" height="3" fill="#3d2f2a"/></svg></div><div class="t" style="left:465px;top:677px;font-size:17px;line-height:20px;color:#606060">探矿钻机</div><div class="t" style="left:611px;top:677px;font-size:17px;line-height:20px;color:#3f8fe6">MFR9LEQQZ...</div><div class="t" style="left:765px;top:677px;font-size:17px;line-height:20px;color:#606060">华夏巨匠ZLJ...</div><div class="t" style="left:911px;top:677px;font-size:17px;line-height:20px;color:#606060">西安雀维</div><div class="t" style="left:1057px;top:676px;width:57px;height:22px;line-height:22px;text-align:center;border-radius:2px;background:#c9ad84;color:#fff;font-size:15px">已报废</div><div class="t" style="left:1324px;top:677px;font-size:17px;line-height:20px;color:#606060">17339...</div><div class="t" style="left:1431px;top:677px;font-size:17px;line-height:20px;color:#606060">否</div><div class="t" style="left:1537px;top:677px;width:51px;overflow:hidden;font-size:17px;line-height:20px;color:#606060">生成制</div><div class="abs" style="left:260px;top:723px;width:21px;height:21px;border:1px solid #d2d2d2;border-radius:2px;background:#fff"></div><div class="t" style="left:300px;width:73px;text-align:center;top:724px;font-size:17px;line-height:20px;color:#606060">7</div><div class="abs" style="left:400px;top:724px;line-height:0"><svg width="20" height="21" viewBox="0 0 20 21"><rect x="16" y="1" width="2.5" height="18" fill="#222"/><path d="M4 11 L8 7 L11 8 L13 5 L16 8 V19 H5 Z" fill="#ec6430"/><rect x="0" y="10" width="6" height="4" fill="#3b4b55"/><rect x="8" y="12" width="5" height="3" fill="#3d2f2a"/></svg></div><div class="t" style="left:465px;top:724px;font-size:17px;line-height:20px;color:#606060">探矿钻机</div><div class="t" style="left:611px;top:724px;font-size:17px;line-height:20px;color:#3f8fe6">UU677FKBC...</div><div class="t" style="left:765px;top:724px;font-size:17px;line-height:20px;color:#606060">华夏巨匠ZLJ...</div><div class="t" style="left:911px;top:724px;font-size:17px;line-height:20px;color:#606060">西安雀维信...</div><div class="t" style="left:1057px;top:723px;width:72px;height:22px;line-height:22px;text-align:center;border-radius:2px;background:#f41414;color:#fff;font-size:15px">运行异常</div><div class="abs" style="left:1177px;top:724px;filter:blur(0.5px)"><div style="position:absolute;left:0px;top:0px;width:8px;height:9px;background:#dcdcdc"></div><div style="position:absolute;left:8px;top:0px;width:8px;height:9px;background:#e2e6ea"></div><div style="position:absolute;left:17px;top:0px;width:8px;height:9px;background:#d0d0d0"></div><div style="position:absolute;left:26px;top:0px;width:8px;height:9px;background:#e6e6e6"></div><div style="position:absolute;left:34px;top:0px;width:8px;height:9px;background:#bdbdbd"></div><div style="position:absolute;left:43px;top:0px;width:8px;height:9px;background:#e2e2e2"></div><div style="position:absolute;left:0px;top:9px;width:8px;height:9px;background:#d6d6d6"></div><div style="position:absolute;left:8px;top:9px;width:8px;height:9px;background:#dde1e6"></div><div style="position:absolute;left:17px;top:9px;width:8px;height:9px;background:#e4e4e4"></div><div style="position:absolute;left:26px;top:9px;width:8px;height:9px;background:#d2d2d2"></div><div style="position:absolute;left:34px;top:9px;width:8px;height:9px;background:#c2c2c2"></div><div style="position:absolute;left:43px;top:9px;width:8px;height:9px;background:#dedede"></div></div><div class="t" style="left:1324px;top:724px;font-size:17px;line-height:20px;color:#606060">17339...</div><div class="t" style="left:1431px;top:724px;font-size:17px;line-height:20px;color:#606060">否</div><div class="t" style="left:1537px;top:724px;width:51px;overflow:hidden;font-size:17px;line-height:20px;color:#606060">机械设</div><div class="abs" style="left:260px;top:770px;width:21px;height:21px;border:1px solid #d2d2d2;border-radius:2px;background:#fff"></div><div class="t" style="left:300px;width:73px;text-align:center;top:771px;font-size:17px;line-height:20px;color:#606060">8</div><div class="abs" style="left:395px;top:766px;line-height:0"><svg width="30" height="30" viewBox="0 0 30 30"><rect width="30" height="30" fill="#c3c7d6"/><path d="M0 2 L10 30 M4 0 L14 30 M-4 8 L6 30 M8 0 L12 10" stroke="#8d94b3" stroke-width="1.6"/><rect x="10" y="4" width="13" height="21" fill="#e9542a"/><rect x="12" y="7" width="9" height="3" fill="#c8431f"/><rect x="22" y="0" width="4" height="26" fill="#d34d24"/><rect x="26" y="3" width="3" height="24" fill="#3b3b3b"/><rect x="1" y="14" width="9" height="10" fill="#2f7a7a"/><rect x="2" y="16" width="5" height="6" fill="#4aa3a3"/><rect x="0" y="25" width="30" height="5" fill="#d9542b"/><rect x="0" y="27" width="6" height="3" fill="#c9a27a"/></svg></div><div class="t" style="left:465px;top:771px;font-size:17px;line-height:20px;color:#606060">探矿钻机</div><div class="t" style="left:611px;top:771px;font-size:17px;line-height:20px;color:#3f8fe6">BJ0RTMZJ32...</div><div class="t" style="left:765px;top:771px;font-size:17px;line-height:20px;color:#606060">华夏巨匠ZLJ...</div><div class="t" style="left:911px;top:771px;font-size:17px;line-height:20px;color:#606060">河南工程电...</div><div class="t" style="left:1057px;top:770px;width:72px;height:22px;line-height:22px;text-align:center;border-radius:2px;background:#fbd406;color:#fff;font-size:15px">过保运行</div><div class="abs" style="left:1177px;top:771px;filter:blur(0.5px)"><div style="position:absolute;left:0px;top:0px;width:9px;height:7px;background:#e0e0e0"></div><div style="position:absolute;left:9px;top:0px;width:9px;height:7px;background:#e4e8ec"></div><div style="position:absolute;left:18px;top:0px;width:9px;height:7px;background:#e6e6e6"></div><div style="position:absolute;left:27px;top:0px;width:9px;height:7px;background:#f4f4f4"></div><div style="position:absolute;left:36px;top:0px;width:9px;height:7px;background:#d8d8d8"></div><div style="position:absolute;left:46px;top:0px;width:9px;height:7px;background:#e8ecf0"></div><div style="position:absolute;left:0px;top:7px;width:9px;height:9px;background:#cbcbcb"></div><div style="position:absolute;left:9px;top:7px;width:9px;height:9px;background:#c9ccd2"></div><div style="position:absolute;left:18px;top:7px;width:9px;height:9px;background:#cfcfcf"></div><div style="position:absolute;left:27px;top:7px;width:9px;height:9px;background:#eeeeee"></div><div style="position:absolute;left:36px;top:7px;width:9px;height:9px;background:#d0d0d0"></div><div style="position:absolute;left:46px;top:7px;width:9px;height:9px;background:#dfe2e8"></div></div><div class="t" style="left:1324px;top:771px;font-size:17px;line-height:20px;color:#606060">17339...</div><div class="t" style="left:1431px;top:771px;font-size:17px;line-height:20px;color:#606060">否</div><div class="t" style="left:1537px;top:771px;width:51px;overflow:hidden;font-size:17px;line-height:20px;color:#606060">生成制</div><div class="abs" style="left:260px;top:816px;width:21px;height:21px;border:1px solid #d2d2d2;border-radius:2px;background:#fff"></div><div class="t" style="left:300px;width:73px;text-align:center;top:817px;font-size:17px;line-height:20px;color:#606060">9</div><div class="abs" style="left:395px;top:812px;line-height:0"><svg width="30" height="30" viewBox="0 0 30 30"><rect width="30" height="30" fill="#7793a6"/><rect x="0" y="0" width="12" height="3" fill="#2a2a2a"/><rect x="16" y="0" width="14" height="2" fill="#bfc6cc"/><path d="M5 7 L13 3 L25 4 L29 10 L28 22 L22 28 L9 28 L3 21 L4 12 Z" fill="#c94f3d"/><rect x="8" y="9" width="7" height="7" fill="#a83a2b"/><rect x="17" y="6" width="8" height="5" fill="#d86a55"/><rect x="12" y="18" width="10" height="6" fill="#b8432f"/><rect x="4" y="15" width="4" height="5" fill="#e07a66"/><rect x="0" y="26" width="8" height="4" fill="#4f6f85"/></svg></div><div class="t" style="left:465px;top:817px;font-size:17px;line-height:20px;color:#606060">臂架泵</div><div class="t" style="left:611px;top:817px;font-size:17px;line-height:20px;color:#3f8fe6">TGOI7AILW...</div><div class="t" style="left:765px;top:817px;font-size:17px;line-height:20px;color:#606060">TOST-305</div><div class="t" style="left:911px;top:817px;font-size:17px;line-height:20px;color:#606060">河南工程电...</div><div class="t" style="left:1057px;top:816px;width:72px;height:22px;line-height:22px;text-align:center;border-radius:2px;background:#f41414;color:#fff;font-size:15px">运行异常</div><div class="abs" style="left:1177px;top:816px;filter:blur(0.5px)"><div style="position:absolute;left:0px;top:0px;width:9px;height:7px;background:#f2f2f2"></div><div style="position:absolute;left:9px;top:0px;width:9px;height:7px;background:#e6e8ea"></div><div style="position:absolute;left:18px;top:0px;width:9px;height:7px;background:#ececec"></div><div style="position:absolute;left:27px;top:0px;width:9px;height:7px;background:#e6e6e6"></div><div style="position:absolute;left:0px;top:7px;width:9px;height:9px;background:#d2d2d2"></div><div style="position:absolute;left:9px;top:7px;width:9px;height:9px;background:#d6d6d8"></div><div style="position:absolute;left:18px;top:7px;width:9px;height:9px;background:#c2c2c2"></div><div style="position:absolute;left:27px;top:7px;width:9px;height:9px;background:#d0d0d2"></div></div><div class="t" style="left:1324px;top:817px;font-size:17px;line-height:20px;color:#606060">17392...</div><div class="t" style="left:1431px;top:817px;font-size:17px;line-height:20px;color:#606060">否</div><div class="t" style="left:1537px;top:817px;width:51px;overflow:hidden;font-size:17px;line-height:20px;color:#606060">卫生间</div><div class="abs" style="left:260px;top:863px;width:21px;height:21px;border:1px solid #d2d2d2;border-radius:2px;background:#fff"></div><div class="t" style="left:300px;width:73px;text-align:center;top:864px;font-size:17px;line-height:20px;color:#606060">10</div><div class="abs" style="left:396px;top:862px;line-height:0"><svg width="28" height="25" viewBox="0 0 28 25"><rect x="1" y="7" width="26" height="17" fill="#e9e9e9"/><rect x="1" y="20" width="26" height="4" fill="#dcdcdc"/><rect x="0" y="3" width="28" height="4" fill="#1f1f1f"/><rect x="9" y="5" width="14" height="3" fill="#6e2a36"/><rect x="5" y="0" width="16" height="3" fill="#d0d0d0"/><rect x="4" y="17" width="18" height="1.2" fill="#444"/><rect x="3" y="9" width="5" height="2" fill="#bbb"/></svg></div><div class="t" style="left:465px;top:864px;font-size:17px;line-height:20px;color:#606060">打印机</div><div class="t" style="left:611px;top:864px;font-size:17px;line-height:20px;color:#3f8fe6">733H2KE402...</div><div class="t" style="left:765px;top:864px;font-size:17px;line-height:20px;color:#606060">惠普打印机</div><div class="t" style="left:911px;top:864px;font-size:17px;line-height:20px;color:#606060">西安雀维信...</div><div class="t" style="left:1057px;top:863px;width:72px;height:22px;line-height:22px;text-align:center;border-radius:2px;background:#0b6fc0;color:#fff;font-size:15px">停机检修</div><div class="abs" style="left:1177px;top:866px;filter:blur(0.5px)"><div style="position:absolute;left:0px;top:0px;width:9px;height:3px;background:#777"></div><div style="position:absolute;left:9px;top:0px;width:9px;height:3px;background:#888"></div><div style="position:absolute;left:18px;top:0px;width:9px;height:3px;background:#ddd"></div><div style="position:absolute;left:27px;top:0px;width:9px;height:3px;background:#eee"></div><div style="position:absolute;left:0px;top:3px;width:9px;height:8px;background:#c8c8c8"></div><div style="position:absolute;left:9px;top:3px;width:9px;height:8px;background:#cacacc"></div><div style="position:absolute;left:18px;top:3px;width:9px;height:8px;background:#ececec"></div><div style="position:absolute;left:27px;top:3px;width:9px;height:8px;background:#f0f0f0"></div><div style="position:absolute;left:0px;top:11px;width:9px;height:6px;background:#eeeeee"></div><div style="position:absolute;left:9px;top:11px;width:9px;height:6px;background:#ececec"></div><div style="position:absolute;left:18px;top:11px;width:9px;height:6px;background:#eeeeee"></div><div style="position:absolute;left:27px;top:11px;width:9px;height:6px;background:#fafafa"></div></div><div class="t" style="left:1324px;top:864px;font-size:17px;line-height:20px;color:#606060">15829...</div><div class="t" style="left:1431px;top:864px;font-size:17px;line-height:20px;color:#606060">否</div><div class="t" style="left:1537px;top:864px;width:51px;overflow:hidden;font-size:17px;line-height:20px;color:#606060">办公设</div><div class="abs" style="left:1578px;top:381px;width:10px;height:517px;background:linear-gradient(to right, rgba(0,0,0,0), rgba(0,0,0,0.05))"></div><div class="abs" style="left:1588px;top:381px;width:285px;height:517px;background:#fff"></div><div class="abs" style="left:1588px;top:381px;width:285px;height:47px;background:#f2f2f2"></div><div class="abs" style="left:1685px;top:381px;width:1px;height:517px;background:#e6e6e6"></div><div class="abs" style="left:1588px;top:381px;width:1px;height:517px;background:#ececec"></div><div class="abs" style="left:1588px;top:428px;width:285px;height:1px;background:#e6e6e6"></div><div class="abs" style="left:1588px;top:475px;width:285px;height:1px;background:#e6e6e6"></div><div class="abs" style="left:1588px;top:522px;width:285px;height:1px;background:#e6e6e6"></div><div class="abs" style="left:1588px;top:569px;width:285px;height:1px;background:#e6e6e6"></div><div class="abs" style="left:1588px;top:615px;width:285px;height:1px;background:#e6e6e6"></div><div class="abs" style="left:1588px;top:662px;width:285px;height:1px;background:#e6e6e6"></div><div class="abs" style="left:1588px;top:709px;width:285px;height:1px;background:#e6e6e6"></div><div class="abs" style="left:1588px;top:850px;width:285px;height:1px;background:#e6e6e6"></div><div class="abs" style="left:1588px;top:896px;width:285px;height:1px;background:#e6e6e6"></div><div class="t" style="left:1611px;top:396px;font-size:17px;line-height:20px;color:#5a5a5a;font-weight:700">设备码</div><div class="t" style="left:1703px;top:396px;font-size:17px;line-height:20px;color:#5a5a5a;font-weight:700">操作</div><svg class="abs" style="left:1622px;top:439px" width="30" height="30" viewBox="0 0 30 30"><rect x="1" y="1" width="28" height="26" fill="#e9e9e9"/><rect x="8" y="19" width="2" height="2" fill="#333"/><rect x="18" y="5" width="2" height="2" fill="#333"/><rect x="12" y="20" width="2" height="2" fill="#333"/><rect x="16" y="21" width="2" height="2" fill="#333"/><rect x="19" y="3" width="2" height="2" fill="#333"/><rect x="20" y="1" width="2" height="2" fill="#333"/><rect x="27" y="16" width="2" height="2" fill="#333"/><rect x="9" y="18" width="2" height="2" fill="#333"/><rect x="8" y="7" width="2" height="2" fill="#333"/><rect x="23" y="16" width="2" height="2" fill="#333"/><rect x="18" y="18" width="2" height="2" fill="#333"/><rect x="16" y="13" width="2" height="2" fill="#333"/><rect x="21" y="5" width="2" height="2" fill="#333"/><rect x="8" y="21" width="2" height="2" fill="#333"/><rect x="2" y="2" width="9" height="8" fill="#b9bbbb"/><rect x="2" y="10" width="9" height="8" fill="#9a9d9d"/><rect x="2" y="18" width="9" height="8" fill="#9a9d9d"/><rect x="11" y="2" width="9" height="8" fill="#b9bbbb"/><rect x="11" y="10" width="9" height="8" fill="#9a9d9d"/><rect x="11" y="18" width="9" height="8" fill="#7e8282"/><rect x="20" y="2" width="9" height="8" fill="#848888"/><rect x="20" y="18" width="9" height="8" fill="#a8abab"/><rect x="10" y="9" width="9" height="9" fill="#86a7a7"/><path d="M1 20h4v5h-4z M1 1h3v3h-3z M24 1h4v3h-4z" fill="#2a2a2a"/><rect x="4" y="27" width="22" height="1" fill="#d5dcd6"/><rect x="5" y="27" width="2" height="2" fill="#3fbf5a"/></svg><div class="t" style="left:1704px;top:443px;font-size:17px;line-height:20px;color:#168a80">修改</div><div class="t" style="left:1755px;top:443px;font-size:17px;line-height:20px;color:#168a80">详情</div><svg class="abs" style="left:1804px;top:450px" width="22" height="5" viewBox="0 0 22 5"><rect x="0.5" y="1" width="3.5" height="3" rx="0.8" fill="#999"/><rect x="9" y="1" width="3.5" height="3" rx="0.8" fill="#999"/><rect x="17.5" y="1" width="3.5" height="3" rx="0.8" fill="#999"/></svg><svg class="abs" style="left:1622px;top:486px" width="30" height="30" viewBox="0 0 30 30"><rect x="1" y="1" width="28" height="26" fill="#e9e9e9"/><rect x="19" y="2" width="2" height="2" fill="#333"/><rect x="14" y="16" width="2" height="2" fill="#333"/><rect x="19" y="1" width="2" height="2" fill="#333"/><rect x="7" y="15" width="2" height="2" fill="#333"/><rect x="27" y="16" width="2" height="2" fill="#333"/><rect x="27" y="9" width="2" height="2" fill="#333"/><rect x="21" y="6" width="2" height="2" fill="#333"/><rect x="2" y="17" width="2" height="2" fill="#333"/><rect x="16" y="11" width="2" height="2" fill="#333"/><rect x="3" y="8" width="2" height="2" fill="#333"/><rect x="24" y="12" width="2" height="2" fill="#333"/><rect x="2" y="14" width="2" height="2" fill="#333"/><rect x="5" y="20" width="2" height="2" fill="#333"/><rect x="12" y="13" width="2" height="2" fill="#333"/><rect x="2" y="2" width="9" height="8" fill="#848888"/><rect x="2" y="10" width="9" height="8" fill="#8c8f8f"/><rect x="2" y="18" width="9" height="8" fill="#848888"/><rect x="11" y="2" width="9" height="8" fill="#a8abab"/><rect x="11" y="10" width="9" height="8" fill="#8c8f8f"/><rect x="20" y="2" width="9" height="8" fill="#9a9d9d"/><rect x="20" y="10" width="9" height="8" fill="#8c8f8f"/><rect x="20" y="18" width="9" height="8" fill="#7e8282"/><rect x="10" y="9" width="9" height="9" fill="#86a7a7"/><path d="M1 20h4v5h-4z M1 1h3v3h-3z M24 1h4v3h-4z" fill="#2a2a2a"/><rect x="4" y="27" width="22" height="1" fill="#d5dcd6"/><rect x="5" y="27" width="2" height="2" fill="#3fbf5a"/></svg><div class="t" style="left:1704px;top:490px;font-size:17px;line-height:20px;color:#168a80">详情</div><div class="t" style="left:1755px;top:490px;font-size:17px;line-height:20px;color:#168a80">删除</div><div class="t" style="left:1806px;top:490px;font-size:17px;line-height:20px;color:#168a80">调拨</div><svg class="abs" style="left:1622px;top:533px" width="30" height="30" viewBox="0 0 30 30"><rect x="1" y="1" width="28" height="26" fill="#e9e9e9"/><rect x="17" y="14" width="2" height="2" fill="#333"/><rect x="26" y="10" width="2" height="2" fill="#333"/><rect x="12" y="10" width="2" height="2" fill="#333"/><rect x="6" y="25" width="2" height="2" fill="#333"/><rect x="23" y="23" width="2" height="2" fill="#333"/><rect x="18" y="22" width="2" height="2" fill="#333"/><rect x="9" y="4" width="2" height="2" fill="#333"/><rect x="1" y="8" width="2" height="2" fill="#333"/><rect x="13" y="24" width="2" height="2" fill="#333"/><rect x="14" y="9" width="2" height="2" fill="#333"/><rect x="17" y="11" width="2" height="2" fill="#333"/><rect x="21" y="22" width="2" height="2" fill="#333"/><rect x="24" y="13" width="2" height="2" fill="#333"/><rect x="5" y="18" width="2" height="2" fill="#333"/><rect x="2" y="2" width="9" height="8" fill="#8c8f8f"/><rect x="2" y="10" width="9" height="8" fill="#848888"/><rect x="2" y="18" width="9" height="8" fill="#848888"/><rect x="11" y="2" width="9" height="8" fill="#b9bbbb"/><rect x="11" y="10" width="9" height="8" fill="#848888"/><rect x="11" y="18" width="9" height="8" fill="#7e8282"/><rect x="20" y="2" width="9" height="8" fill="#b9bbbb"/><rect x="20" y="18" width="9" height="8" fill="#b9bbbb"/><rect x="10" y="9" width="9" height="9" fill="#86a7a7"/><path d="M1 20h4v5h-4z M1 1h3v3h-3z M24 1h4v3h-4z" fill="#2a2a2a"/><rect x="4" y="27" width="22" height="1" fill="#d5dcd6"/><rect x="5" y="27" width="2" height="2" fill="#3fbf5a"/></svg><div class="t" style="left:1704px;top:537px;font-size:17px;line-height:20px;color:#168a80">修改</div><div class="t" style="left:1755px;top:537px;font-size:17px;line-height:20px;color:#168a80">详情</div><svg class="abs" style="left:1804px;top:544px" width="22" height="5" viewBox="0 0 22 5"><rect x="0.5" y="1" width="3.5" height="3" rx="0.8" fill="#999"/><rect x="9" y="1" width="3.5" height="3" rx="0.8" fill="#999"/><rect x="17.5" y="1" width="3.5" height="3" rx="0.8" fill="#999"/></svg><svg class="abs" style="left:1622px;top:579px" width="30" height="30" viewBox="0 0 30 30"><rect x="1" y="1" width="28" height="26" fill="#e9e9e9"/><rect x="23" y="13" width="2" height="2" fill="#333"/><rect x="27" y="19" width="2" height="2" fill="#333"/><rect x="6" y="7" width="2" height="2" fill="#333"/><rect x="6" y="7" width="2" height="2" fill="#333"/><rect x="6" y="22" width="2" height="2" fill="#333"/><rect x="22" y="3" width="2" height="2" fill="#333"/><rect x="23" y="25" width="2" height="2" fill="#333"/><rect x="5" y="23" width="2" height="2" fill="#333"/><rect x="10" y="24" width="2" height="2" fill="#333"/><rect x="25" y="1" width="2" height="2" fill="#333"/><rect x="15" y="15" width="2" height="2" fill="#333"/><rect x="24" y="21" width="2" height="2" fill="#333"/><rect x="4" y="1" width="2" height="2" fill="#333"/><rect x="17" y="6" width="2" height="2" fill="#333"/><rect x="2" y="10" width="9" height="8" fill="#a8abab"/><rect x="2" y="18" width="9" height="8" fill="#a8abab"/><rect x="11" y="10" width="9" height="8" fill="#7e8282"/><rect x="11" y="18" width="9" height="8" fill="#8c8f8f"/><rect x="20" y="2" width="9" height="8" fill="#7e8282"/><rect x="20" y="10" width="9" height="8" fill="#848888"/><rect x="20" y="18" width="9" height="8" fill="#9a9d9d"/><rect x="10" y="9" width="9" height="9" fill="#86a7a7"/><path d="M1 20h4v5h-4z M1 1h3v3h-3z M24 1h4v3h-4z" fill="#2a2a2a"/><rect x="4" y="27" width="22" height="1" fill="#d5dcd6"/><rect x="5" y="27" width="2" height="2" fill="#3fbf5a"/></svg><div class="t" style="left:1704px;top:583px;font-size:17px;line-height:20px;color:#168a80">修改</div><div class="t" style="left:1755px;top:583px;font-size:17px;line-height:20px;color:#168a80">详情</div><svg class="abs" style="left:1804px;top:590px" width="22" height="5" viewBox="0 0 22 5"><rect x="0.5" y="1" width="3.5" height="3" rx="0.8" fill="#999"/><rect x="9" y="1" width="3.5" height="3" rx="0.8" fill="#999"/><rect x="17.5" y="1" width="3.5" height="3" rx="0.8" fill="#999"/></svg><svg class="abs" style="left:1622px;top:626px" width="30" height="30" viewBox="0 0 30 30"><rect x="1" y="1" width="28" height="26" fill="#e9e9e9"/><rect x="1" y="16" width="2" height="2" fill="#333"/><rect x="4" y="25" width="2" height="2" fill="#333"/><rect x="13" y="5" width="2" height="2" fill="#333"/><rect x="22" y="2" width="2" height="2" fill="#333"/><rect x="5" y="4" width="2" height="2" fill="#333"/><rect x="18" y="8" width="2" height="2" fill="#333"/><rect x="23" y="25" width="2" height="2" fill="#333"/><rect x="5" y="5" width="2" height="2" fill="#333"/><rect x="24" y="2" width="2" height="2" fill="#333"/><rect x="22" y="2" width="2" height="2" fill="#333"/><rect x="5" y="8" width="2" height="2" fill="#333"/><rect x="18" y="24" width="2" height="2" fill="#333"/><rect x="15" y="17" width="2" height="2" fill="#333"/><rect x="14" y="7" width="2" height="2" fill="#333"/><rect x="2" y="10" width="9" height="8" fill="#9a9d9d"/><rect x="2" y="18" width="9" height="8" fill="#a8abab"/><rect x="11" y="2" width="9" height="8" fill="#8c8f8f"/><rect x="11" y="10" width="9" height="8" fill="#7e8282"/><rect x="11" y="18" width="9" height="8" fill="#8c8f8f"/><rect x="20" y="2" width="9" height="8" fill="#8c8f8f"/><rect x="20" y="10" width="9" height="8" fill="#848888"/><rect x="20" y="18" width="9" height="8" fill="#9a9d9d"/><rect x="10" y="9" width="9" height="9" fill="#86a7a7"/><path d="M1 20h4v5h-4z M1 1h3v3h-3z M24 1h4v3h-4z" fill="#2a2a2a"/><rect x="4" y="27" width="22" height="1" fill="#d5dcd6"/><rect x="5" y="27" width="2" height="2" fill="#3fbf5a"/></svg><div class="t" style="left:1704px;top:630px;font-size:17px;line-height:20px;color:#168a80">修改</div><div class="t" style="left:1755px;top:630px;font-size:17px;line-height:20px;color:#168a80">详情</div><svg class="abs" style="left:1804px;top:637px" width="22" height="5" viewBox="0 0 22 5"><rect x="0.5" y="1" width="3.5" height="3" rx="0.8" fill="#999"/><rect x="9" y="1" width="3.5" height="3" rx="0.8" fill="#999"/><rect x="17.5" y="1" width="3.5" height="3" rx="0.8" fill="#999"/></svg><svg class="abs" style="left:1622px;top:673px" width="30" height="30" viewBox="0 0 30 30"><rect x="1" y="1" width="28" height="26" fill="#e9e9e9"/><rect x="21" y="14" width="2" height="2" fill="#333"/><rect x="14" y="25" width="2" height="2" fill="#333"/><rect x="24" y="4" width="2" height="2" fill="#333"/><rect x="3" y="12" width="2" height="2" fill="#333"/><rect x="23" y="15" width="2" height="2" fill="#333"/><rect x="12" y="2" width="2" height="2" fill="#333"/><rect x="20" y="22" width="2" height="2" fill="#333"/><rect x="6" y="19" width="2" height="2" fill="#333"/><rect x="12" y="11" width="2" height="2" fill="#333"/><rect x="9" y="23" width="2" height="2" fill="#333"/><rect x="11" y="20" width="2" height="2" fill="#333"/><rect x="24" y="10" width="2" height="2" fill="#333"/><rect x="16" y="25" width="2" height="2" fill="#333"/><rect x="19" y="13" width="2" height="2" fill="#333"/><rect x="2" y="2" width="9" height="8" fill="#b9bbbb"/><rect x="2" y="10" width="9" height="8" fill="#a8abab"/><rect x="2" y="18" width="9" height="8" fill="#b9bbbb"/><rect x="11" y="2" width="9" height="8" fill="#a8abab"/><rect x="11" y="10" width="9" height="8" fill="#b9bbbb"/><rect x="20" y="18" width="9" height="8" fill="#8c8f8f"/><rect x="10" y="9" width="9" height="9" fill="#86a7a7"/><path d="M1 20h4v5h-4z M1 1h3v3h-3z M24 1h4v3h-4z" fill="#2a2a2a"/><rect x="4" y="27" width="22" height="1" fill="#d5dcd6"/><rect x="5" y="27" width="2" height="2" fill="#3fbf5a"/></svg><div class="t" style="left:1704px;top:677px;font-size:17px;line-height:20px;color:#168a80">详情</div><div class="t" style="left:1755px;top:677px;font-size:17px;line-height:20px;color:#168a80">删除</div><div class="t" style="left:1806px;top:677px;font-size:17px;line-height:20px;color:#168a80">调拨</div><svg class="abs" style="left:1622px;top:720px" width="30" height="30" viewBox="0 0 30 30"><rect x="1" y="1" width="28" height="26" fill="#e9e9e9"/><rect x="9" y="14" width="2" height="2" fill="#333"/><rect x="16" y="9" width="2" height="2" fill="#333"/><rect x="3" y="10" width="2" height="2" fill="#333"/><rect x="11" y="1" width="2" height="2" fill="#333"/><rect x="3" y="16" width="2" height="2" fill="#333"/><rect x="1" y="4" width="2" height="2" fill="#333"/><rect x="10" y="4" width="2" height="2" fill="#333"/><rect x="10" y="24" width="2" height="2" fill="#333"/><rect x="21" y="2" width="2" height="2" fill="#333"/><rect x="20" y="3" width="2" height="2" fill="#333"/><rect x="5" y="9" width="2" height="2" fill="#333"/><rect x="26" y="24" width="2" height="2" fill="#333"/><rect x="5" y="7" width="2" height="2" fill="#333"/><rect x="25" y="23" width="2" height="2" fill="#333"/><rect x="2" y="2" width="9" height="8" fill="#b9bbbb"/><rect x="2" y="10" width="9" height="8" fill="#848888"/><rect x="2" y="18" width="9" height="8" fill="#9a9d9d"/><rect x="11" y="2" width="9" height="8" fill="#7e8282"/><rect x="11" y="10" width="9" height="8" fill="#848888"/><rect x="20" y="2" width="9" height="8" fill="#9a9d9d"/><rect x="20" y="10" width="9" height="8" fill="#7e8282"/><rect x="20" y="18" width="9" height="8" fill="#a8abab"/><rect x="10" y="9" width="9" height="9" fill="#86a7a7"/><path d="M1 20h4v5h-4z M1 1h3v3h-3z M24 1h4v3h-4z" fill="#2a2a2a"/><rect x="4" y="27" width="22" height="1" fill="#d5dcd6"/><rect x="5" y="27" width="2" height="2" fill="#3fbf5a"/></svg><div class="t" style="left:1704px;top:724px;font-size:17px;line-height:20px;color:#168a80">修改</div><div class="t" style="left:1755px;top:724px;font-size:17px;line-height:20px;color:#168a80">详情</div><svg class="abs" style="left:1804px;top:731px" width="22" height="5" viewBox="0 0 22 5"><rect x="0.5" y="1" width="3.5" height="3" rx="0.8" fill="#999"/><rect x="9" y="1" width="3.5" height="3" rx="0.8" fill="#999"/><rect x="17.5" y="1" width="3.5" height="3" rx="0.8" fill="#999"/></svg><svg class="abs" style="left:1622px;top:767px" width="30" height="30" viewBox="0 0 30 30"><rect x="1" y="1" width="28" height="26" fill="#e9e9e9"/><rect x="9" y="2" width="2" height="2" fill="#333"/><rect x="24" y="17" width="2" height="2" fill="#333"/><rect x="16" y="12" width="2" height="2" fill="#333"/><rect x="14" y="2" width="2" height="2" fill="#333"/><rect x="5" y="6" width="2" height="2" fill="#333"/><rect x="26" y="14" width="2" height="2" fill="#333"/><rect x="27" y="6" width="2" height="2" fill="#333"/><rect x="12" y="15" width="2" height="2" fill="#333"/><rect x="21" y="1" width="2" height="2" fill="#333"/><rect x="2" y="18" width="2" height="2" fill="#333"/><rect x="13" y="15" width="2" height="2" fill="#333"/><rect x="1" y="8" width="2" height="2" fill="#333"/><rect x="3" y="6" width="2" height="2" fill="#333"/><rect x="6" y="16" width="2" height="2" fill="#333"/><rect x="2" y="2" width="9" height="8" fill="#7e8282"/><rect x="2" y="10" width="9" height="8" fill="#a8abab"/><rect x="2" y="18" width="9" height="8" fill="#9a9d9d"/><rect x="20" y="2" width="9" height="8" fill="#848888"/><rect x="20" y="18" width="9" height="8" fill="#8c8f8f"/><rect x="10" y="9" width="9" height="9" fill="#86a7a7"/><path d="M1 20h4v5h-4z M1 1h3v3h-3z M24 1h4v3h-4z" fill="#2a2a2a"/><rect x="4" y="27" width="22" height="1" fill="#d5dcd6"/><rect x="5" y="27" width="2" height="2" fill="#3fbf5a"/></svg><div class="t" style="left:1704px;top:771px;font-size:17px;line-height:20px;color:#168a80">修改</div><div class="t" style="left:1755px;top:771px;font-size:17px;line-height:20px;color:#168a80">详情</div><svg class="abs" style="left:1804px;top:778px" width="22" height="5" viewBox="0 0 22 5"><rect x="0.5" y="1" width="3.5" height="3" rx="0.8" fill="#999"/><rect x="9" y="1" width="3.5" height="3" rx="0.8" fill="#999"/><rect x="17.5" y="1" width="3.5" height="3" rx="0.8" fill="#999"/></svg><svg class="abs" style="left:1622px;top:813px" width="30" height="30" viewBox="0 0 30 30"><rect x="1" y="1" width="28" height="26" fill="#e9e9e9"/><rect x="8" y="3" width="2" height="2" fill="#333"/><rect x="21" y="15" width="2" height="2" fill="#333"/><rect x="1" y="5" width="2" height="2" fill="#333"/><rect x="10" y="23" width="2" height="2" fill="#333"/><rect x="1" y="22" width="2" height="2" fill="#333"/><rect x="20" y="1" width="2" height="2" fill="#333"/><rect x="27" y="16" width="2" height="2" fill="#333"/><rect x="13" y="16" width="2" height="2" fill="#333"/><rect x="26" y="18" width="2" height="2" fill="#333"/><rect x="10" y="25" width="2" height="2" fill="#333"/><rect x="6" y="24" width="2" height="2" fill="#333"/><rect x="19" y="11" width="2" height="2" fill="#333"/><rect x="22" y="6" width="2" height="2" fill="#333"/><rect x="17" y="4" width="2" height="2" fill="#333"/><rect x="2" y="2" width="9" height="8" fill="#848888"/><rect x="2" y="10" width="9" height="8" fill="#7e8282"/><rect x="2" y="18" width="9" height="8" fill="#9a9d9d"/><rect x="11" y="2" width="9" height="8" fill="#9a9d9d"/><rect x="11" y="10" width="9" height="8" fill="#9a9d9d"/><rect x="11" y="18" width="9" height="8" fill="#9a9d9d"/><rect x="20" y="2" width="9" height="8" fill="#848888"/><rect x="20" y="10" width="9" height="8" fill="#9a9d9d"/><rect x="10" y="9" width="9" height="9" fill="#86a7a7"/><path d="M1 20h4v5h-4z M1 1h3v3h-3z M24 1h4v3h-4z" fill="#2a2a2a"/><rect x="4" y="27" width="22" height="1" fill="#d5dcd6"/><rect x="5" y="27" width="2" height="2" fill="#3fbf5a"/></svg><div class="t" style="left:1704px;top:817px;font-size:17px;line-height:20px;color:#168a80">修改</div><div class="t" style="left:1755px;top:817px;font-size:17px;line-height:20px;color:#168a80">详情</div><svg class="abs" style="left:1804px;top:824px" width="22" height="5" viewBox="0 0 22 5"><rect x="0.5" y="1" width="3.5" height="3" rx="0.8" fill="#999"/><rect x="9" y="1" width="3.5" height="3" rx="0.8" fill="#999"/><rect x="17.5" y="1" width="3.5" height="3" rx="0.8" fill="#999"/></svg><svg class="abs" style="left:1622px;top:860px" width="30" height="30" viewBox="0 0 30 30"><rect x="1" y="1" width="28" height="26" fill="#e9e9e9"/><rect x="3" y="10" width="2" height="2" fill="#333"/><rect x="14" y="8" width="2" height="2" fill="#333"/><rect x="26" y="15" width="2" height="2" fill="#333"/><rect x="10" y="9" width="2" height="2" fill="#333"/><rect x="26" y="18" width="2" height="2" fill="#333"/><rect x="4" y="24" width="2" height="2" fill="#333"/><rect x="27" y="16" width="2" height="2" fill="#333"/><rect x="6" y="15" width="2" height="2" fill="#333"/><rect x="17" y="5" width="2" height="2" fill="#333"/><rect x="26" y="23" width="2" height="2" fill="#333"/><rect x="3" y="23" width="2" height="2" fill="#333"/><rect x="12" y="24" width="2" height="2" fill="#333"/><rect x="6" y="14" width="2" height="2" fill="#333"/><rect x="24" y="23" width="2" height="2" fill="#333"/><rect x="2" y="2" width="9" height="8" fill="#b9bbbb"/><rect x="2" y="10" width="9" height="8" fill="#9a9d9d"/><rect x="2" y="18" width="9" height="8" fill="#8c8f8f"/><rect x="11" y="2" width="9" height="8" fill="#9a9d9d"/><rect x="11" y="10" width="9" height="8" fill="#848888"/><rect x="11" y="18" width="9" height="8" fill="#b9bbbb"/><rect x="20" y="2" width="9" height="8" fill="#7e8282"/><rect x="20" y="10" width="9" height="8" fill="#7e8282"/><rect x="20" y="18" width="9" height="8" fill="#9a9d9d"/><rect x="10" y="9" width="9" height="9" fill="#86a7a7"/><path d="M1 20h4v5h-4z M1 1h3v3h-3z M24 1h4v3h-4z" fill="#2a2a2a"/><rect x="4" y="27" width="22" height="1" fill="#d5dcd6"/><rect x="5" y="27" width="2" height="2" fill="#3fbf5a"/></svg><div class="t" style="left:1704px;top:864px;font-size:17px;line-height:20px;color:#168a80">修改</div><div class="t" style="left:1755px;top:864px;font-size:17px;line-height:20px;color:#168a80">详情</div><svg class="abs" style="left:1804px;top:871px" width="22" height="5" viewBox="0 0 22 5"><rect x="0.5" y="1" width="3.5" height="3" rx="0.8" fill="#999"/><rect x="9" y="1" width="3.5" height="3" rx="0.8" fill="#999"/><rect x="17.5" y="1" width="3.5" height="3" rx="0.8" fill="#999"/></svg><div class="abs" style="left:242px;top:898px;width:1631px;height:21px;background:#f8f8f8"></div><svg class="abs" style="left:253px;top:901px" width="12" height="14" viewBox="0 0 12 14"><path d="M11 1 V13 L2 7 Z" fill="#8a8a8a" stroke="#8a8a8a" stroke-width="1.5" stroke-linejoin="round"/></svg><div class="abs" style="left:277px;top:901px;width:1023px;height:14px;border-radius:7px;background:#8a8a8a"></div><svg class="abs" style="left:1852px;top:901px" width="12" height="14" viewBox="0 0 12 14"><path d="M1 1 V13 L10 7 Z" fill="#8a8a8a" stroke="#8a8a8a" stroke-width="1.5" stroke-linejoin="round"/></svg><div class="abs" style="left:260px;top:932px;width:21px;height:21px;border:1px solid #d2d2d2;border-radius:2px;background:#fff"></div><div class="t" style="left:294px;top:933px;font-size:14px;line-height:18px;color:#333">全选</div><div class="t" style="left:1232px;top:934px;font-size:14px;line-height:18px;color:#333">共 259 条</div><svg class="abs" style="left:1318px;top:935px" width="10" height="16" viewBox="0 0 10 16"><path d="M8.5 1 L2 8 L8.5 15" fill="none" stroke="#ccc" stroke-width="1.5"/></svg><div class="abs" style="left:1345px;top:927px;width:38px;height:31px;background:#009688;border-radius:2px"></div><div class="t" style="left:1345px;width:38px;text-align:center;top:933px;font-size:15px;line-height:19px;color:#fff">1</div><div class="t" style="left:1385px;width:30px;text-align:center;top:933px;font-size:15px;line-height:19px;color:#333">2</div><div class="t" style="left:1421px;width:30px;text-align:center;top:933px;font-size:15px;line-height:19px;color:#333">3</div><svg class="abs" style="left:1473px;top:935px" width="10" height="16" viewBox="0 0 10 16"><path d="M1.5 1 L8 8 L1.5 15" fill="none" stroke="#333" stroke-width="1.5"/></svg><div class="abs" style="left:1501px;top:927px;width:94px;height:31px;border:1px solid #e2e2e2;border-radius:2px"></div><div class="t" style="left:1511px;top:933px;font-size:15px;line-height:19px;color:#333">10 条/页</div><svg class="abs" style="left:1577px;top:938px" width="13" height="9" viewBox="0 0 13 9"><path d="M1 1.5 L6.5 7 L12 1.5" fill="none" stroke="#333" stroke-width="1.8"/></svg><svg class="abs" style="left:1634px;top:932px" width="21" height="21" viewBox="0 0 21 21"><path d="M17.5 7.5 A8 8 0 1 0 18 13" fill="none" stroke="#444" stroke-width="1.6"/><path d="M18.5 2.5 V8 H13" fill="none" stroke="#444" stroke-width="1.6"/></svg><div class="t" style="left:1682px;top:933px;font-size:14px;line-height:18px;color:#999">到第</div><div class="abs" style="left:1722px;top:927px;width:49px;height:31px;border:1px solid #e2e2e2;border-bottom:none"></div><div class="t" style="left:1722px;width:49px;text-align:center;top:933px;font-size:15px;line-height:19px;color:#333">1</div><div class="t" style="left:1783px;top:933px;font-size:14px;line-height:18px;color:#999">页</div><div class="abs" style="left:1809px;top:927px;width:55px;height:31px;border:1px solid #e2e2e2;border-bottom:none"></div><div class="t" style="left:1822px;top:933px;font-size:14px;line-height:18px;color:#333">确定</div><div class="abs" style="left:1897px;top:72px;width:23px;height:899px;background:#fbfbfb"></div><svg class="abs" style="left:1902px;top:84px" width="14" height="11" viewBox="0 0 14 11"><path d="M7 1 L13 10 H1 Z" fill="#8a8a8a" stroke="#8a8a8a" stroke-width="1.5" stroke-linejoin="round"/></svg><div class="abs" style="left:1902px;top:107px;width:14px;height:802px;border-radius:7px;background:#8a8a8a"></div><svg class="abs" style="left:1902px;top:948px" width="14" height="11" viewBox="0 0 14 11"><path d="M1 1 H13 L7 10 Z" fill="#8a8a8a" stroke="#8a8a8a" stroke-width="1.5" stroke-linejoin="round"/></svg></body></html>
